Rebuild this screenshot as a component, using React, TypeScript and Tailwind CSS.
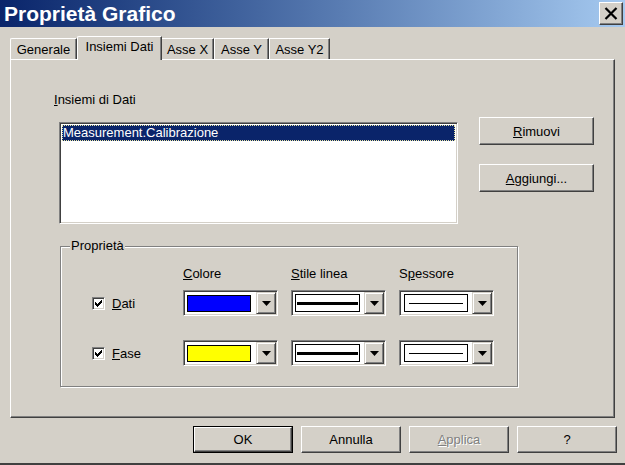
import React from "react";

const raised =
  "border border-t-white border-l-white border-r-[#404040] border-b-[#404040] shadow-[inset_-1px_-1px_#808080]";
const sunken =
  "border border-t-[#808080] border-l-[#808080] border-r-white border-b-white shadow-[inset_1px_1px_#404040,inset_-1px_-1px_#d4d0c8]";
const dropBtn =
  "border border-t-[#d4d0c8] border-l-[#d4d0c8] border-r-[#404040] border-b-[#404040] shadow-[inset_1px_1px_white,inset_-1px_-1px_#808080]";

function Arrow() {
  return (
    <svg width="9" height="5" viewBox="0 0 9 5">
      <polygon points="0,0 9,0 4.5,5" fill="black" />
    </svg>
  );
}

function Combo({ children }: { children: React.ReactNode }) {
  return (
    <div className={`w-[95px] h-[26px] flex bg-white ${sunken} p-[1px]`}>
      <div className="flex-1 flex items-center bg-white">{children}</div>
      <div className={`w-[20px] h-full bg-[#d4d0c8] flex items-center justify-center ${dropBtn}`}>
        <Arrow />
      </div>
    </div>
  );
}

function Check() {
  return (
    <div className={`w-[13px] h-[13px] bg-white ${sunken} flex items-center justify-center`}>
      <svg width="7" height="7" viewBox="0 0 7 7" shapeRendering="crispEdges">
        <path d="M0 2 L2 4 L7 -1 L7 2 L2 7 L0 5 Z" fill="black" />
      </svg>
    </div>
  );
}

function Btn({ children, w = "w-[100px]", h = "h-[27px]" }: { children: React.ReactNode; w?: string; h?: string }) {
  return (
    <div className={`${w} ${h} bg-[#d4d0c8] ${raised} flex items-center justify-center`}>{children}</div>
  );
}

export default function App() {
  return (
    <div
      className="w-[625px] h-[465px] bg-[#d4d0c8] overflow-hidden flex flex-col text-[13px] leading-[15px] text-black"
      style={{ fontFamily: "'Liberation Sans', Arial, sans-serif" }}
    >
      {/* Title bar */}
      <div className="h-[27px] shrink-0 flex items-center bg-linear-to-r from-[#0a246a] to-[#a6caf0]">
        <span className="ml-[4px] text-white font-bold text-[21px] leading-[24px]">Proprietà Grafico</span>
        <div className={`ml-auto mr-[2px] w-[24px] h-[23px] bg-[#d4d0c8] ${raised} flex items-center justify-center`}>
          <svg width="14" height="13" viewBox="0 0 14 13">
            <path d="M1.5 1 L12.5 12 M12.5 1 L1.5 12" stroke="black" strokeWidth="2.2" />
          </svg>
        </div>
      </div>

      {/* Tabs */}
      <div className="ml-[10px] mt-[9px] h-[23px] flex items-end">
        <div className="w-[67px] h-[21px] border-t border-l border-white border-r border-r-[#404040] shadow-[inset_-1px_0_#808080] rounded-tl-[2px] flex items-center justify-center">
          Generale
        </div>
        <div className="relative z-10 -mb-[1px] w-[85px] h-[24px] bg-[#d4d0c8] border-t border-l border-white border-r border-r-[#404040] shadow-[inset_-1px_0_#808080] rounded-tl-[2px] flex items-start justify-center pt-[2px]">
          Insiemi Dati
        </div>
        <div className="w-[52px] h-[21px] border-t border-white border-r border-r-[#404040] shadow-[inset_-1px_0_#808080] flex items-center justify-center">
          Asse X
        </div>
        <div className="w-[55px] h-[21px] border-t border-l border-white border-r border-r-[#404040] shadow-[inset_-1px_0_#808080] flex items-center justify-center">
          Asse Y
        </div>
        <div className="w-[61px] h-[21px] border-t border-l border-white border-r border-r-[#404040] shadow-[inset_-1px_0_#808080] flex items-center justify-center">
          Asse Y2
        </div>
      </div>

      {/* Panel */}
      <div className={`ml-[10px] w-[605px] h-[359px] shrink-0 ${raised}`}>
        <div className="flex">
          <div className="ml-[43px] pt-[32px] flex flex-col">
            <div>
              <span className="underline">I</span>nsiemi di Dati
            </div>
            <div className={`ml-[5px] mt-[15px] w-[399px] h-[102px] bg-white ${sunken} p-[2px]`}>
              <div className="h-[16px] bg-[#0a246a] text-white border border-dotted border-[#e8e4a0] leading-[14px] whitespace-nowrap">
                Measurement.Calibrazione
              </div>
            </div>
          </div>
          <div className="ml-[21px] pt-[57px] flex flex-col">
            <Btn w="w-[115px]" h="h-[28px]">
              <span>
                <span className="underline">R</span>imuovi
              </span>
            </Btn>
            <div className="mt-[19px]">
              <Btn w="w-[115px]" h="h-[28px]">
                <span>
                  <span className="underline">A</span>ggiungi...
                </span>
              </Btn>
            </div>
          </div>
        </div>

        {/* Group box */}
        <div className="relative mt-[22px] ml-[49px] w-[458px] h-[141px] border border-[#808080] shadow-[inset_1px_1px_white,1px_1px_white]">
          <div className="absolute left-[9px] top-[-9px] px-[1px] bg-[#d4d0c8]">Proprietà</div>
          <div className="mt-[19px] flex">
            <div className="w-[122px]" />
            <div className="w-[108px]">
              <span className="underline">C</span>olore
            </div>
            <div className="w-[108px]">
              <span className="underline">S</span>tile linea
            </div>
            <div className="w-[108px]">
              S<span className="underline">p</span>essore
            </div>
          </div>
          {[
            { label: "Dati", acc: "D", rest: "ati", color: "bg-[#0000ff]", mt: "mt-[9px]" },
            { label: "Fase", acc: "F", rest: "ase", color: "bg-[#ffff00]", mt: "mt-[24px]" },
          ].map((r) => (
            <div key={r.label} className={`${r.mt} h-[26px] flex items-center`}>
              <div className="w-[122px] pl-[31px] flex items-center">
                <Check />
                <span className="ml-[7px]">
                  <span className="underline">{r.acc}</span>
                  {r.rest}
                </span>
              </div>
              <div className="flex gap-[13px]">
                <Combo>
                  <div className={`ml-[2px] w-[64px] h-[17px] border border-black ${r.color}`} />
                </Combo>
                <Combo>
                  <div className="ml-[2px] w-[65px] h-[18px] border border-black bg-white flex items-center px-[1px]">
                    <div className="w-full h-[3px] bg-black" />
                  </div>
                </Combo>
                <Combo>
                  <div className="ml-[3px] w-[64px] h-[18px] border border-black bg-white flex items-center px-[4px]">
                    <div className="w-full h-[1px] bg-black" />
                  </div>
                </Combo>
              </div>
            </div>
          ))}
        </div>
      </div>

      {/* Bottom buttons */}
      <div className="mt-[8px] pl-[193px] flex gap-[8px]">
        <div className="w-[100px] h-[27px] border border-black">
          <div className={`w-full h-full bg-[#d4d0c8] ${raised} flex items-center justify-center`}>OK</div>
        </div>
        <Btn>Annulla</Btn>
        <Btn>
          <span className="text-[#808080] [text-shadow:1px_1px_white]">
            <span className="underline">A</span>pplica
          </span>
        </Btn>
        <Btn>?</Btn>
      </div>

      <div className="mt-auto h-[2px] bg-[#404040] shrink-0" />
    </div>
  );
}
